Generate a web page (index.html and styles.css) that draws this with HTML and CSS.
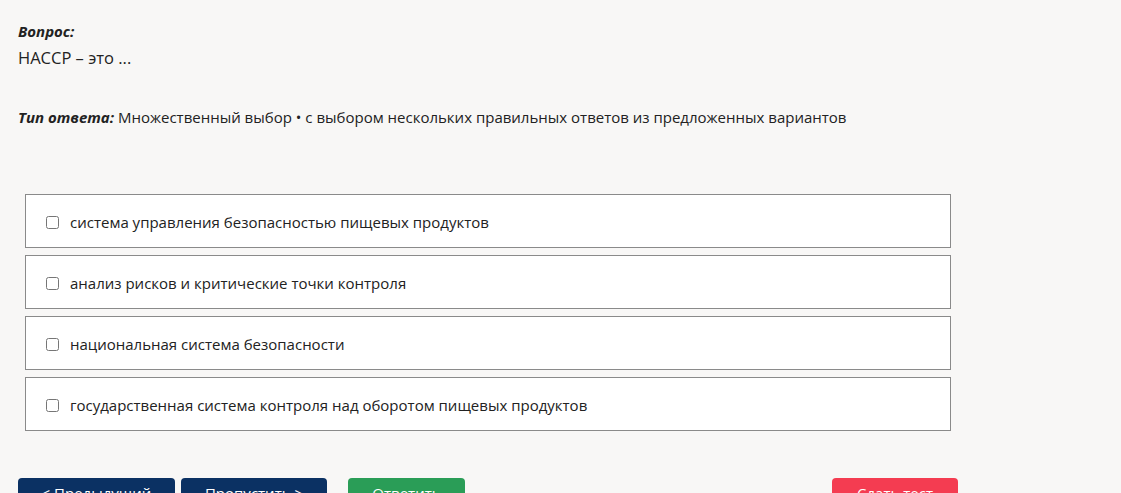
FILE: index.html
```html
<!DOCTYPE html>
<html lang="ru">
<head>
  <meta charset="utf-8">
  <link rel="stylesheet" href="styles.css">
  <title>Тест</title>
</head>
<body>
  <div class="test">
    <div class="question">
      <div class="label">Вопрос:</div>
      <div class="text">HACCP – это ...</div>
    </div>
    <p class="answer-type"><em>Тип ответа:</em> Множественный выбор • с выбором нескольких правильных ответов из предложенных вариантов</p>

    <ul class="options">
      <li class="option"><label><input type="checkbox"> система управления безопасностью пищевых продуктов</label></li>
      <li class="option"><label><input type="checkbox"> анализ рисков и критические точки контроля</label></li>
      <li class="option"><label><input type="checkbox"> национальная система безопасности</label></li>
      <li class="option"><label><input type="checkbox"> государственная система контроля над оборотом пищевых продуктов</label></li>
    </ul>

    <div class="actions">
      <button class="btn btn-navy btn-prev">&lt; Предыдущий</button>
      <button class="btn btn-navy btn-skip">Пропустить &gt;</button>
      <button class="btn btn-green btn-answer">Ответить</button>
      <button class="btn btn-red btn-finish">Сдать тест</button>
    </div>
  </div>
</body>
</html>
```

FILE: styles.css
```css
html { font-size: 100%; }
body {
  margin: 0;
  background: #f8f7f6;
  color: #222;
  font-family: "Open Sans", "Noto Sans", sans-serif;
  font-size: 15px;
  line-height: 1.5em;
}

.test {
  padding: 19px 18px 0 18px;
  width: 940px;
}

.question .label {
  font-weight: bold;
  font-style: italic;
  line-height: 24px;
}
.question .text {
  font-size: 16.5px;
  line-height: 30px;
}

.answer-type {
  margin: 33px 0 0 0;
}
.answer-type em {
  font-weight: bold;
}

.options {
  list-style: none;
  margin: 65px 0 0 7px;
  padding: 0;
  width: 926px;
}
.option {
  background: #fff;
  border: 1px solid #8a8a8a;
  margin-bottom: 7px;
  height: 52px;
  box-sizing: content-box;
  display: flex;
  align-items: center;
  padding: 0 0 0 20px;
}
.option label {
  display: flex;
  align-items: center;
  gap: 11px;
  padding-top: 4px;
}
.option input {
  margin: 0;
  width: 13px;
  height: 13px;
}

.actions {
  display: flex;
  margin-top: 47px;
}
.btn {
  border: 0;
  border-radius: 4px;
  color: #fff;
  font-family: inherit;
  font-size: 15px;
  line-height: 24px;
  height: 38px;
  padding: 3px 0 11px 0;
  box-sizing: border-box;
}
.btn-navy { background: #0b3163; }
.btn-green { background: #2a9d57; }
.btn-red { background: #f43c51; }
.btn-prev { width: 157px; }
.btn-skip { width: 146px; margin-left: 6px; }
.btn-answer { width: 117px; margin-left: 21px; }
.btn-finish { width: 126px; margin-left: auto; }
```
